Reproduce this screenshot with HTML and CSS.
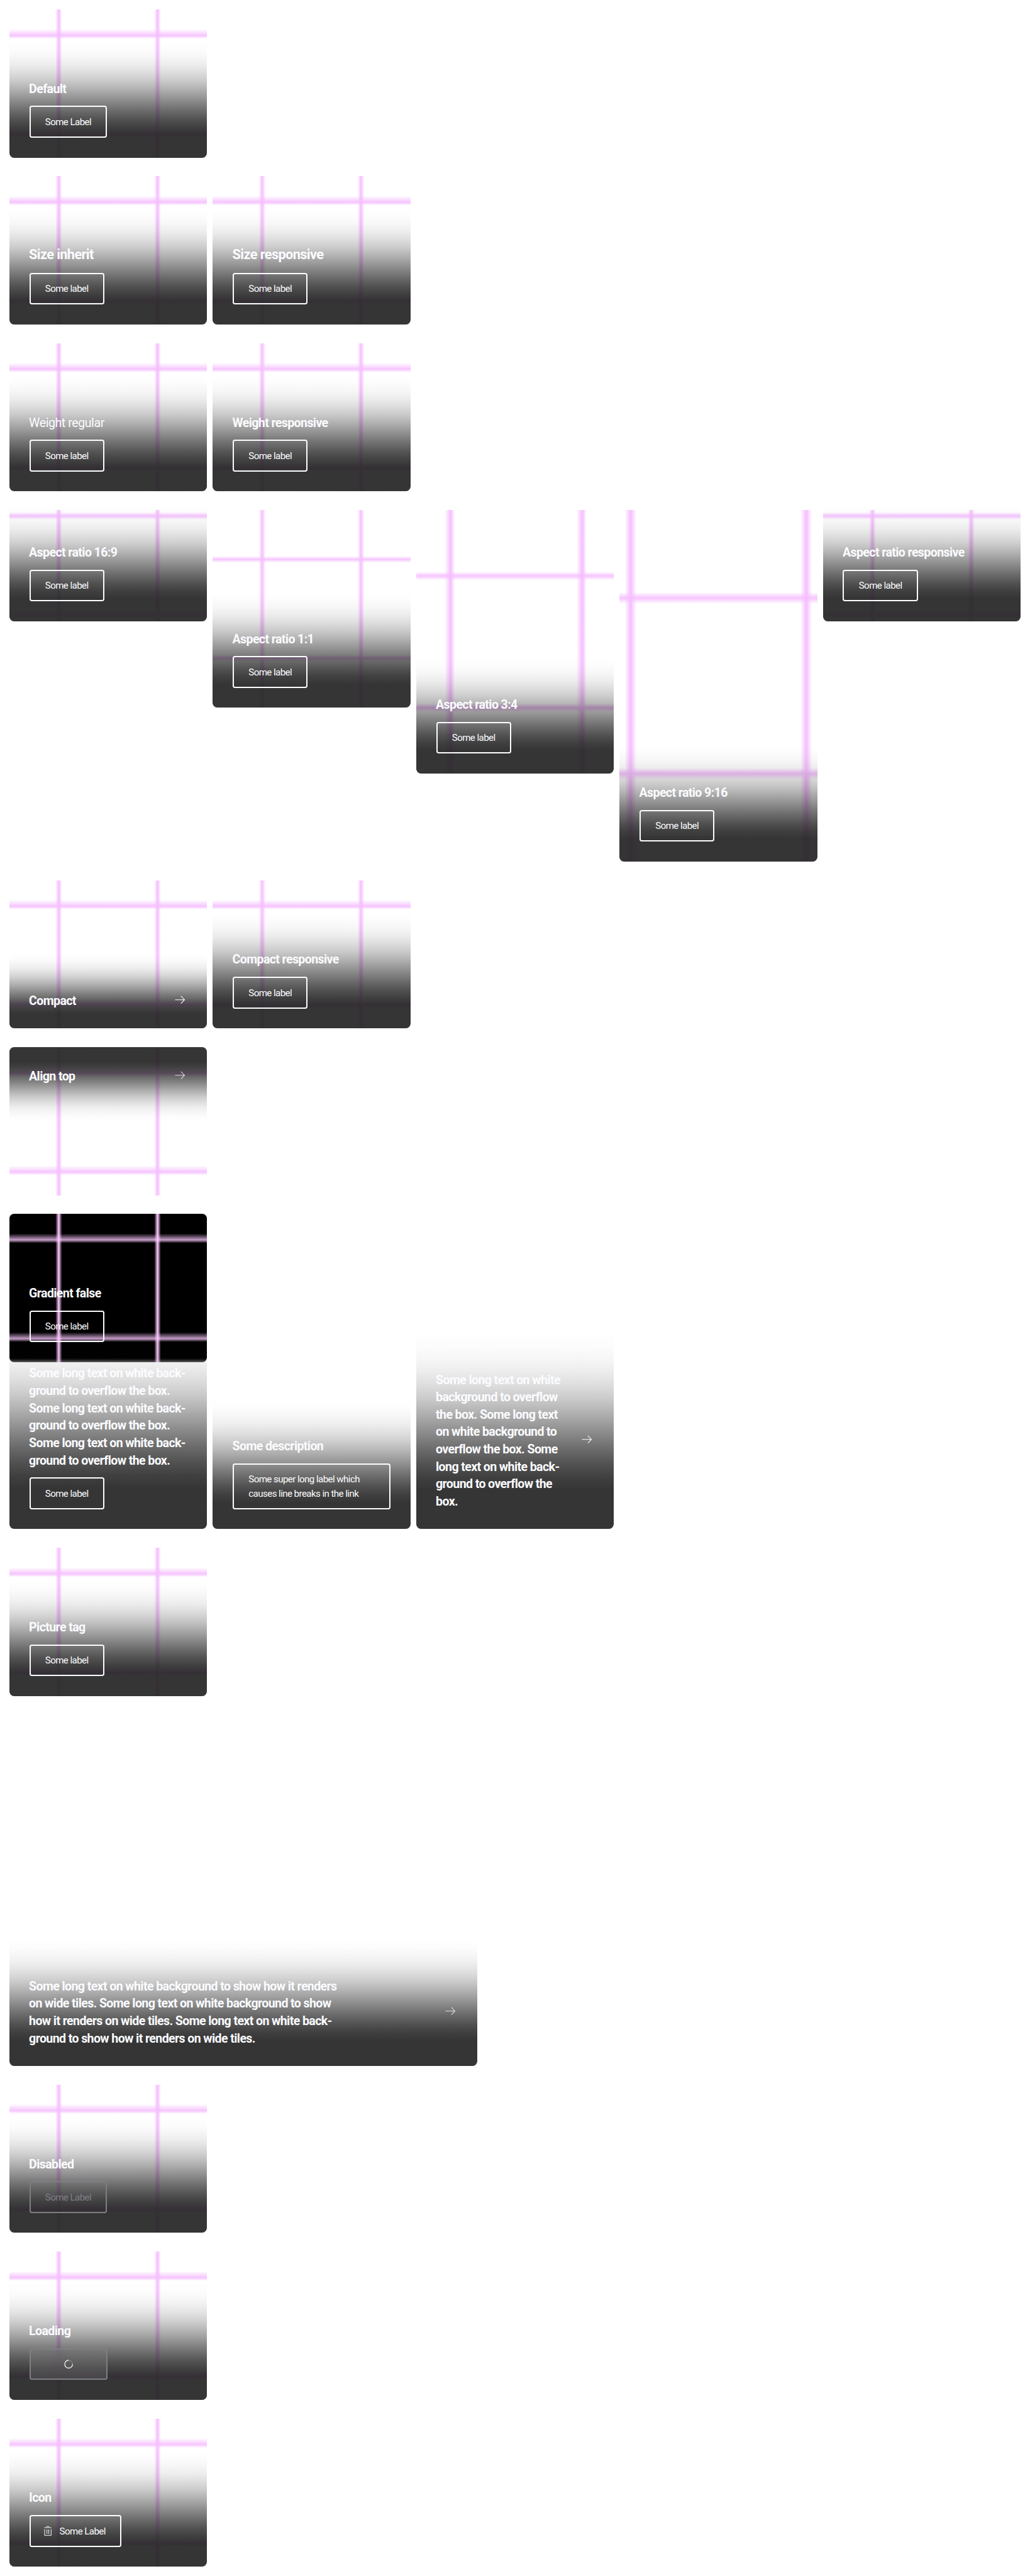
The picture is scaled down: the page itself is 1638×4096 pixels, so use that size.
FILE: index.html
```html
<!DOCTYPE html>
<html lang="en">
<head>
<meta charset="utf-8">
<title>Link Tile</title>
<link rel="stylesheet" href="styles.css">
</head>
<body>
<svg class="sprite" aria-hidden="true">
  <symbol id="arrow" viewBox="0 0 24 24"><path d="M3.7 11.5H19.7M13.7 5.2L19.9 11.5L13.7 17.8" fill="none" stroke="currentColor" stroke-width="1.1"/></symbol>
  <symbol id="trash" viewBox="0 0 24 24"><path d="M10 3.4H14M6 5.4H18M6.5 8V18.5H17.5V8M10.5 8.5V16M13.5 8.5V16" fill="none" stroke="currentColor" stroke-width="1.1"/></symbol>
  <symbol id="spinner" viewBox="0 0 24 24"><circle cx="12" cy="12" r="6.7" fill="none" stroke="currentColor" stroke-opacity=".3" stroke-width="1.1"/><path d="M18.7 12A6.7 6.7 0 1 1 12 5.3" fill="none" stroke="currentColor" stroke-width="1.2"/></symbol>
</svg>
<main class="page">
  <section class="row">
    <article class="tile grid"><div class="footer"><p class="title">Default</p><button class="btn">Some Label</button></div></article>
  </section>
  <section class="row">
    <article class="tile grid"><div class="footer"><p class="title large">Size inherit</p><a class="btn">Some label</a></div></article>
    <article class="tile grid"><div class="footer"><p class="title large">Size responsive</p><a class="btn">Some label</a></div></article>
  </section>
  <section class="row">
    <article class="tile grid"><div class="footer"><p class="title regular">Weight regular</p><a class="btn">Some label</a></div></article>
    <article class="tile grid"><div class="footer"><p class="title">Weight responsive</p><a class="btn">Some label</a></div></article>
  </section>
  <section class="row">
    <article class="tile grid r16x9"><div class="footer"><p class="title">Aspect ratio 16:9</p><a class="btn">Some label</a></div></article>
    <article class="tile grid r1x1"><div class="footer"><p class="title">Aspect ratio 1:1</p><a class="btn">Some label</a></div></article>
    <article class="tile grid r3x4"><div class="footer"><p class="title">Aspect ratio 3:4</p><a class="btn">Some label</a></div></article>
    <article class="tile grid r9x16"><div class="footer"><p class="title">Aspect ratio 9:16</p><a class="btn">Some label</a></div></article>
    <article class="tile grid r16x9"><div class="footer"><p class="title">Aspect ratio responsive</p><a class="btn">Some label</a></div></article>
  </section>
  <section class="row">
    <article class="tile grid"><div class="footer compact"><p class="title">Compact</p><svg class="icon"><use href="#arrow"/></svg></div></article>
    <article class="tile grid"><div class="footer"><p class="title">Compact responsive</p><a class="btn">Some label</a></div></article>
  </section>
  <section class="row">
    <article class="tile grid top"><div class="footer compact"><p class="title">Align top</p><svg class="icon dim"><use href="#arrow"/></svg></div></article>
  </section>
  <section class="row">
    <article class="tile grid dark"><div class="footer plain"><p class="title">Gradient false</p><a class="btn">Some label</a></div></article>
  </section>
  <section class="row">
    <article class="tile"><div class="footer"><p class="title">Some long text on white back-<br>ground to overflow the box.<br>Some long text on white back-<br>ground to overflow the box.<br>Some long text on white back-<br>ground to overflow the box.</p><a class="btn">Some label</a></div></article>
    <article class="tile"><div class="footer"><p class="title">Some description</p><a class="btn">Some super long label which<br>causes line breaks in the link</a></div></article>
    <article class="tile"><div class="footer compact"><p class="title">Some long text on white<br>background to overflow<br>the box. Some long text<br>on white background to<br>overflow the box. Some<br>long text on white back-<br>ground to overflow the<br>box.</p><svg class="icon"><use href="#arrow"/></svg></div></article>
  </section>
  <section class="row">
    <article class="tile grid"><div class="footer"><p class="title">Picture tag</p><a class="btn">Some label</a></div></article>
  </section>
  <section class="row">
    <article class="tile wide"><div class="footer compact"><p class="title">Some long text on white background to show how it renders<br>on wide tiles. Some long text on white background to show<br>how it renders on wide tiles. Some long text on white back-<br>ground to show how it renders on wide tiles.</p><svg class="icon dim"><use href="#arrow"/></svg></div></article>
  </section>
  <section class="row">
    <article class="tile grid"><div class="footer"><p class="title">Disabled</p><button class="btn disabled">Some Label</button></div></article>
  </section>
  <section class="row">
    <article class="tile grid"><div class="footer"><p class="title">Loading</p><button class="btn loading" aria-label="Loading"><svg class="icon"><use href="#spinner"/></svg></button></div></article>
  </section>
  <section class="row">
    <article class="tile grid"><div class="footer"><p class="title">Icon</p><button class="btn with-icon"><svg class="icon"><use href="#trash"/></svg>Some Label</button></div></article>
  </section>
</main>
</body>
</html>
```
FILE: styles.css
```css
/* 1rem is ten design pixels */
html { font-size: 9.30682px; }
* { box-sizing: border-box; }
body {
  margin: 0;
  background: #fff;
  color: #fbfcff;
  font-family: Roboto, "Liberation Sans", sans-serif;
}
.sprite { display: none; }

.page {
  display: flex;
  flex-direction: column;
  gap: 3.2rem;
  padding: 1.6rem;
}
.row {
  display: grid;
  grid-template-columns: repeat(5, 33.76rem);
  gap: 1rem;
  align-items: start;
}

.tile {
  display: flex;
  align-items: flex-end;
  height: 25.32rem;
  border-radius: .8rem;
}
.r16x9 { height: 18.99rem; }
.r1x1 { height: 33.76rem; }
.r3x4 { height: 45.01rem; }
.r9x16 { height: 60.02rem; }
.wide { width: 80rem; height: 60rem; }
.top { align-items: flex-start; }

/* blurred guide lines at the quarters of a centred square of side --s */
.grid {
  --s: 33.76rem;
  --line: #f6bdff;
  --cross: #f5beffe6;
  --clear: #f6bdff00;
  --q: calc(var(--s) / 4);
  --vl: .56rem;
  --vr: .56rem;
  --vs: 0rem;
  --ht: 1.1rem;
  --hb: .56rem;
  --hs: .22rem;
  background-image:
    linear-gradient(90deg,
      var(--clear) calc(50% - var(--q) + var(--vs) - var(--vl)),
      var(--line) calc(50% - var(--q) + var(--vs)),
      var(--clear) calc(50% - var(--q) + var(--vs) + var(--vr)),
      var(--clear) calc(50% + var(--q) + var(--vs) - var(--vl)),
      var(--line) calc(50% + var(--q) + var(--vs)),
      var(--clear) calc(50% + var(--q) + var(--vs) + var(--vr))),
    linear-gradient(180deg,
      var(--clear) calc(50% - var(--q) + var(--hs) - var(--ht)),
      var(--cross) calc(50% - var(--q) + var(--hs)),
      var(--clear) calc(50% - var(--q) + var(--hs) + var(--hb)),
      var(--clear) calc(50% + var(--q) + var(--hs) - var(--ht)),
      var(--cross) calc(50% + var(--q) + var(--hs)),
      var(--clear) calc(50% + var(--q) + var(--hs) + var(--hb)));
}
.grid.r16x9 { --ht: .67rem; --hb: .63rem; --hs: -.06rem; }
.grid.r1x1 { --ht: .56rem; --hs: 0rem; }
.grid.r3x4 { --s: 45.01rem; --vl: 1rem; --vr: .7rem; --vs: .26rem; --ht: .75rem; --hb: .75rem; --hs: 0rem; }
.grid.r9x16 { --s: 60.02rem; --vl: 1rem; --vr: 1rem; --ht: 1rem; --hb: 1rem; --hs: 0rem; }
.dark {
  --line: #fdc8ff;
  --cross: #fcc8ffc8;
  --clear: #fcc8ff00;
  background-color: #000;
}
.dark::after {
  content: "";
  align-self: flex-end;
  flex: none;
  width: 100%;
  height: .8rem;
  margin-left: -100%;
  border-radius: 0 0 .8rem .8rem;
  background: linear-gradient(#fff0, #ffffff14 40%, #ffffff66);
}

.footer {
  --dir: to top;
  display: flex;
  flex-direction: column;
  align-items: flex-start;
  gap: 1.6rem;
  width: 100%;
  flex: none;
  padding: 6.4rem 3.4rem 3.4rem;
  border-radius: .8rem;
  background: linear-gradient(var(--dir),
    rgba(31,31,31,.9) 20%, rgba(31,31,31,.852) 26.67%, rgba(31,31,31,.768) 33.33%,
    rgba(31,31,31,.668) 40%, rgba(31,31,31,.557) 46.67%, rgba(31,31,31,.443) 53.33%,
    rgba(31,31,31,.333) 60%, rgba(31,31,31,.232) 66.67%, rgba(31,31,31,.149) 73.33%,
    rgba(31,31,31,.084) 80%, rgba(31,31,31,.04) 86.67%, rgba(31,31,31,.012) 93.33%,
    rgba(31,31,31,0) 100%);
}
.footer.plain { background: none; }
.compact {
  flex-direction: row;
  align-items: center;
  justify-content: space-between;
}
.top .footer { --dir: to bottom; padding: 3.4rem 3.4rem 6.4rem; }

.title {
  margin: 0 0 -.2rem -.05rem;
  padding-top: .2rem;
  font-size: 2.1rem;
  font-weight: 700;
  line-height: 2.97rem;
  letter-spacing: -.064rem;
  white-space: nowrap;
}
.large { margin-bottom: 0; padding-top: 0; font-size: 2.34rem; letter-spacing: -.068rem; }
.regular { font-weight: 400; letter-spacing: -.045rem; }

.btn {
  display: flex;
  align-items: center;
  min-height: 5.4rem;
  padding: 1.35rem 2.5rem 1.25rem;
  border: 2px solid #fbfcff;
  border-radius: .4rem;
  background: none;
  color: inherit;
  font: 400 1.62rem/2.4rem Roboto, "Liberation Sans", sans-serif;
  letter-spacing: -.06rem;
  white-space: nowrap;
}
a.btn:has(br) { width: 100%; }
.with-icon { gap: .8rem; padding-left: 1.75rem; }
.disabled { border-color: #7e7f85; color: #7e7f85; }
.loading {
  justify-content: center;
  width: 13.37rem;
  border-color: #7e7f85;
  background: rgba(148, 149, 152, .2);
  backdrop-filter: blur(8px);
}
.icon { flex: none; width: 2.4rem; height: 2.4rem; }
.dim { opacity: .8; }
```
